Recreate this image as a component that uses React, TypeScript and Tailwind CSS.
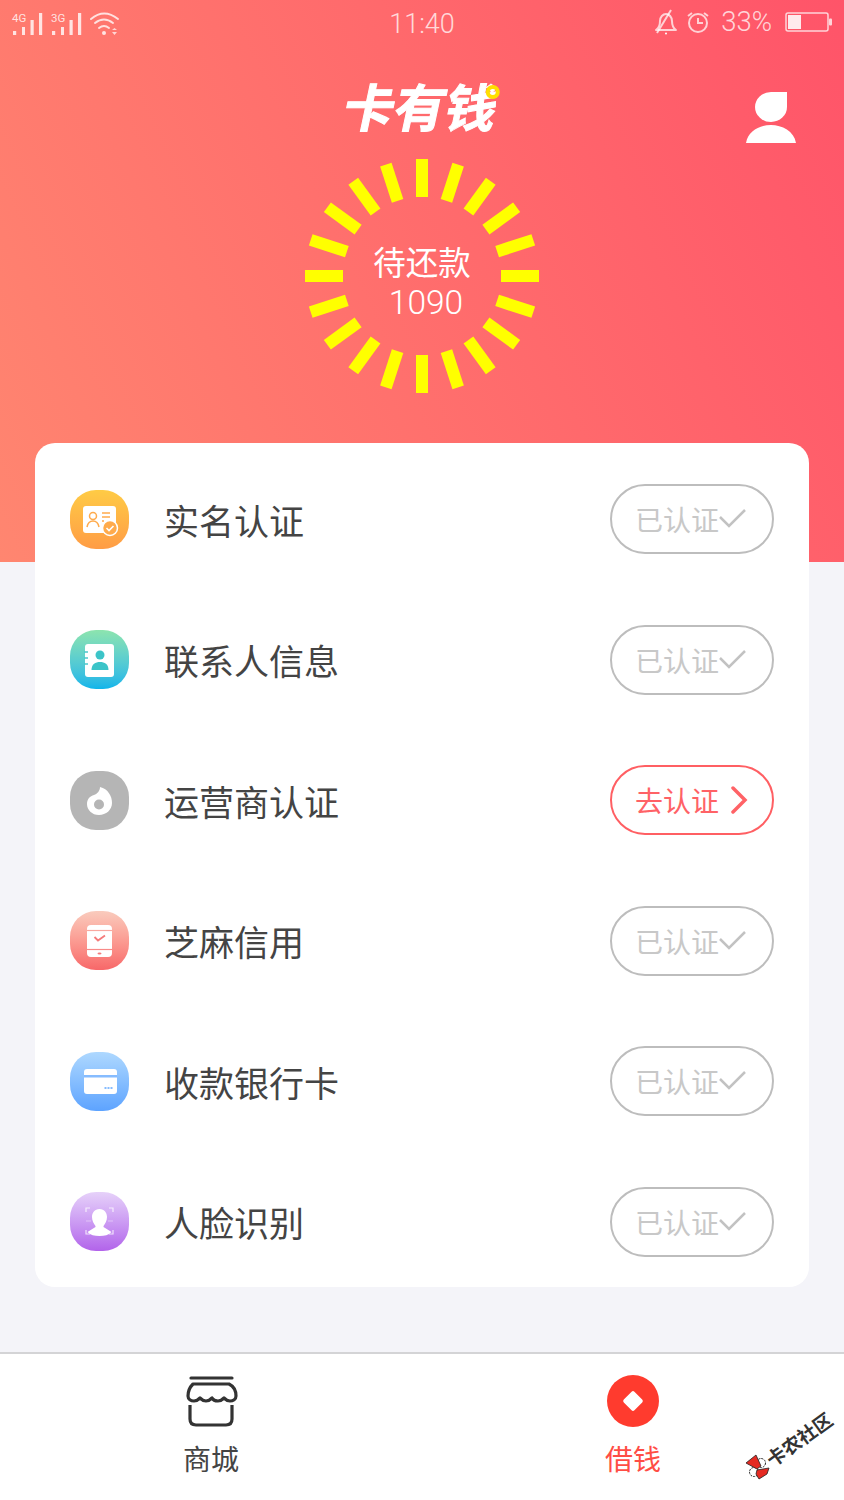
import React from "react";

const CJK = { fontFamily: '"Noto Sans CJK SC", sans-serif' };

function StatusLeft() {
  const bars = (x: number, label: string) => (
    <g key={label} fill="#fff" fillOpacity="0.8">
      <text x={x} y="18.500" fontSize="11.500" fontFamily="Roboto, sans-serif">{label}</text>
      <rect x={x + 1} y="28" width="3.2" height="4" />
      <rect x={x + 10} y="24" width="3" height="8" />
      <rect x={x + 18.5} y="17" width="3.2" height="15" />
      <rect x={x + 27} y="10" width="3.2" height="22" />
    </g>
  );
  return (
    <svg width="120" height="40" viewBox="0 0 120 40" className="ml-0 shrink-0">
      {bars(12, "4G")}
      {bars(51, "3G")}
      <g fill="none" stroke="#fff" strokeOpacity="0.78" strokeWidth="2" strokeLinecap="round">
        <path d="M91 16 Q104 5 118 16" />
        <path d="M95 20 Q104 13 113 20" />
        <path d="M99 25 Q104 21 109 25" />
      </g>
      <circle cx="104" cy="30" r="2" fill="#fff" fillOpacity="0.8" />
      <path d="M112 27h5l-2.5-2zM112 29h5l-2.5 3z" fill="#fff" fillOpacity="0.7" />
    </svg>
  );
}

function StatusRight() {
  return (
    <div className="-mt-[2px] flex items-center">
      <svg width="24" height="26" viewBox="0 0 24 26" fill="none" stroke="#fff" strokeOpacity="0.72" strokeWidth="2">
        <path d="M2 21c3-2 4-5 4-9 0-4 3-7 6-7s6 3 6 7c0 4 1 7 4 9z" strokeLinejoin="round" />
        <path d="M3 24 17 1" />
        <circle cx="12" cy="24.5" r="1" fill="#fff" stroke="none" />
      </svg>
      <svg width="24" height="24" viewBox="0 0 24 24" fill="none" stroke="#fff" strokeOpacity="0.72" strokeWidth="2" className="ml-[8px]">
        <circle cx="12" cy="13" r="9" />
        <path d="M12 8v5h5" />
        <path d="M2 6l4-3M22 6l-4-3" />
      </svg>
      <span className="ml-[11px] text-[27.500px] font-light leading-none text-white/75" style={{ fontFamily: "Roboto, sans-serif" }}>33%</span>
      <svg width="47" height="22" viewBox="0 0 47 22" className="ml-[13px]">
        <rect x="1" y="2" width="42" height="18" rx="2" fill="none" stroke="#fff" strokeOpacity="0.75" strokeWidth="1.5" />
        <rect x="3" y="4" width="13" height="14" fill="#fff" fillOpacity="0.88" />
        <rect x="44" y="7.5" width="3" height="7" rx="1" fill="#fff" fillOpacity="0.75" />
      </svg>
    </div>
  );
}

function Ring() {
  const ticks = Array.from({ length: 20 }, (_, i) => i * 18);
  return (
    <svg width="236" height="236" viewBox="-118 -118 236 236" className="col-start-1 row-start-1">
      {ticks.map((a) => (
        <rect key={a} x="-6" y="-117" width="12" height="38" fill="#ffff00" transform={`rotate(${a})`} />
      ))}
    </svg>
  );
}

function Person() {
  return (
    <svg width="51" height="53" viewBox="0 0 51 53" fill="#fff">
      <path d="M25 1H41V16A16 15 0 1 1 25 1z" />
      <path d="M0 52C2 40 14 34 25 34S48 40 50 52z" />
    </svg>
  );
}

const ic: Record<string, React.ReactNode> = {
  id: (
    <>
      <rect x="13" y="16" width="33" height="27" rx="3" fill="#fff" />
      <circle cx="23" cy="26" r="3.5" fill="none" stroke="#ffab4c" strokeWidth="1.5" />
      <path d="M17 37c1-5 4-6 6-6s5 1 6 6" fill="none" stroke="#ffab4c" strokeWidth="1.5" />
      <path d="M32 23h8M32 27h8M32 31h2" stroke="#ffab4c" strokeWidth="1.3" />
      <circle cx="40" cy="38" r="7.5" fill="#ffab4c" stroke="#fff" strokeWidth="1.5" />
      <path d="M36.5 38l2.5 2.5 4.5-4.5" stroke="#fff" strokeWidth="1.6" fill="none" />
    </>
  ),
  book: (
    <>
      <rect x="15" y="14" width="29" height="33" rx="3" fill="#fff" />
      <circle cx="30" cy="25" r="4.5" fill="#3cc4c8" />
      <path d="M21.500 40c0-6 4-8 8.500-8s8.500 2 8.500 8z" fill="#3cc4c8" />
      <path d="M14 22h4M14 28h4M14 34h4" stroke="#4cc8cc" strokeWidth="1.6" />
    </>
  ),
  drop: (
    <>
      <path d="M30 16c8 2 12 9 12 16 0 7-6 12-13 12s-12-5-12-11c0-5 3-8 7-9 3-1 6-4 6-8z" fill="#fff" />
      <circle cx="29" cy="33.500" r="5" fill="#b5b5b5" />
    </>
  ),
  phone: (
    <>
      <rect x="17" y="14" width="25" height="32" rx="4" fill="#fff" />
      <path d="M17 19.500h25" stroke="#f9a8a0" strokeWidth="1.2" />
      <path d="M17 38.500h25" stroke="#f88a88" strokeWidth="1.2" />
      <path d="M24.500 26l3.500 3.500 7-5" stroke="#f47b7b" strokeWidth="1.8" fill="none" />
      <ellipse cx="29.500" cy="42.500" rx="2" ry="1" fill="#f47b7b" />
    </>
  ),
  card: (
    <>
      <rect x="14" y="17" width="33" height="25" rx="3" fill="#fff" />
      <rect x="14" y="23" width="33" height="2.500" fill="#86bcff" />
      <path d="M34.500 36h8" stroke="#86bcff" strokeWidth="2.200" strokeDasharray="2 1" />
    </>
  ),
  face: (
    <>
      <path d="M16 20v-4h4M39 16h4v4M16 38v4h4M43 38v4h-4" stroke="#fff" strokeOpacity="0.75" strokeWidth="1.2" fill="none" />
      <path d="M16 29h5M38 29h5" stroke="#fff" strokeOpacity="0.4" strokeWidth="1" />
      <path d="M29.500 17c5 0 7.500 4 7.500 8 0 4-2 7-3.500 9v1l8 5c-3 3-7 4-12 4s-9-1-12-4l8-5v-1c-1.500-2-3.500-5-3.500-9 0-4 2.500-8 7.500-8z" fill="#fff" />
    </>
  ),
};

const rows = [
  { t: "实名认证", i: "id", g: "bg-gradient-to-b from-[#ffcb45] to-[#ff9c45]", ok: true },
  { t: "联系人信息", i: "book", g: "bg-gradient-to-b from-[#8ce4ae] to-[#0db5ea]", ok: true },
  { t: "运营商认证", i: "drop", g: "bg-[#b5b5b5]", ok: false },
  { t: "芝麻信用", i: "phone", g: "bg-gradient-to-b from-[#f9cbbd] to-[#f76769]", ok: true },
  { t: "收款银行卡", i: "card", g: "bg-gradient-to-b from-[#aed8ff] to-[#5da3ff]", ok: true },
  { t: "人脸识别", i: "face", g: "bg-gradient-to-b from-[#e6d1f9] to-[#b263ea]", ok: true },
];

function Row({ r }: { r: (typeof rows)[number] }) {
  return (
    <div className="flex h-[70px] items-center px-[35px]">
      <div className={`h-[59px] w-[59px] shrink-0 rounded-[26px] ${r.g}`}>
        <svg width="59" height="59" viewBox="0 0 59 59">{ic[r.i]}</svg>
      </div>
      <div className="ml-[35px] flex-1 text-[35px] leading-none text-[#444444]" style={CJK}>{r.t}</div>
      {r.ok ? (
        <div className="flex h-[70px] w-[164px] items-center rounded-full border-2 border-[#bdbdbd] pl-[23px] text-[28px] text-[#c8c8c8]" style={CJK}>
          <span>已认证</span>
          <svg width="28" height="22" viewBox="0 0 28 22" fill="none" stroke="#c2c2c2" strokeWidth="2.500" className="shrink-0">
            <path d="M1 9l9 9L26 2" />
          </svg>
        </div>
      ) : (
        <div className="flex h-[70px] w-[164px] items-center rounded-full border-2 border-[#ff5f63] pl-[23px] text-[28px] text-[#ff6266]" style={CJK}>
          <span>去认证</span>
          <svg width="18" height="28" viewBox="0 0 18 28" fill="none" stroke="#ff6266" strokeWidth="3.500" strokeLinecap="round" className="ml-[11px] shrink-0">
            <path d="M3 2l12 12L3 26" />
          </svg>
        </div>
      )}
    </div>
  );
}

function Store() {
  return (
    <svg width="54" height="52" viewBox="0 0 54 52" fill="none" stroke="#333" strokeWidth="3.200">
      <path d="M7 3h41" strokeLinecap="round" />
      <path d="M9 9h36c4 2 7 6 7 12 0 3-3 5-6 5-3 0-4-1-6-3-2 2-4 3-6 3s-5-1-6-3c-2 2-4 3-6 3s-4-1-6-3c-2 2-3 3-6 3s-6-2-6-5c0-6 3-10 5-12z" strokeLinejoin="round" />
      <path d="M6 30v14c0 4 2 6 6 6h30c4 0 6-2 6-6V30" />
    </svg>
  );
}

function Coin() {
  return (
    <svg width="52" height="52" viewBox="0 0 52 52">
      <circle cx="26" cy="26" r="26" fill="#ff3b2e" />
      <rect x="18.500" y="18.500" width="15" height="15" rx="2" fill="#fff" transform="rotate(45 26 26)" />
    </svg>
  );
}

function Watermark() {
  return (
    <div className="absolute bottom-[19px] left-[744px] flex origin-[13px_13px] -rotate-[36deg] items-center whitespace-nowrap">
      <svg width="26" height="26" viewBox="0 0 26 26" className="shrink-0">
        <g transform="rotate(36 13 13)">
          <circle cx="17" cy="8" r="4.500" fill="#fff" stroke="#222" strokeDasharray="2 1" />
          <circle cx="10" cy="17" r="4.500" fill="#fff" stroke="#222" strokeDasharray="2 1" />
          <path d="M2 8l10-8 5 11-4 3z" fill="#e52a22" stroke="#222" strokeWidth="0.800" />
          <path d="M13 15l12-2-2 6-8 5-3-5z" fill="#e52a22" stroke="#222" strokeWidth="0.800" />
        </g>
      </svg>
      <span className="text-[19px] font-bold leading-none text-[#333]" style={CJK}>卡农社区</span>
    </div>
  );
}

export default function App() {
  return (
    <div className="relative flex h-[1500px] w-[844px] flex-col overflow-hidden bg-[#f4f4f9]">
      <header className="h-[562px] shrink-0 bg-[linear-gradient(65deg,#ff8670_0%,#ff5469_100%)]">
        <div className="flex h-[46px] items-center justify-between">
          <div className="w-[260px]"><StatusLeft /></div>
          <div className="pt-[2px] text-[27px] font-light leading-none text-white/75" style={{ fontFamily: "Roboto, sans-serif" }}>11:40</div>
          <div className="flex w-[260px] justify-end pr-[12px]"><StatusRight /></div>
        </div>
        <div className="relative mt-[28px] flex h-[62px] justify-center">
          <div className="relative -skew-x-12 text-[51px] font-bold leading-[62px] text-white [-webkit-text-stroke:1px_white]" style={CJK}>
            卡有钱
            <span className="absolute right-[1px] top-[11px] h-[14px] w-[14px] skew-x-12 rounded-full border-[4px] border-[#ffdf00]" />
          </div>
          <div className="absolute right-[47px] top-[17px]"><Person /></div>
        </div>
        <div className="mt-[22px] grid place-items-center">
          <Ring />
          <div className="col-start-1 row-start-1 flex flex-col items-center pt-[10px] text-white">
            <div className="text-[32.500px] leading-[44px]" style={CJK}>待还款</div>
            <div className="pl-[8px] text-[33.500px] font-light leading-[40px]" style={{ fontFamily: "Roboto, sans-serif" }}>1090</div>
          </div>
        </div>
      </header>
      <main className="relative mx-[35px] -mt-[119px] flex flex-col gap-[70.600px] rounded-[20px] bg-white pb-[30px] pt-[41px]">
        {rows.map((r) => (
          <Row key={r.t} r={r} />
        ))}
      </main>
      <nav className="mt-auto flex h-[148px] border-t-2 border-[#d4d4d6] bg-white">
        <div className="flex flex-1 flex-col items-center pt-[21px]">
          <Store />
          <div className="mt-[17px] text-[28px] leading-none text-[#444]" style={CJK}>商城</div>
        </div>
        <div className="flex flex-1 flex-col items-center pt-[21px]">
          <Coin />
          <div className="mt-[17px] text-[28px] leading-none text-[#ff4d45]" style={CJK}>借钱</div>
        </div>
      </nav>
      <Watermark />
    </div>
  );
}
